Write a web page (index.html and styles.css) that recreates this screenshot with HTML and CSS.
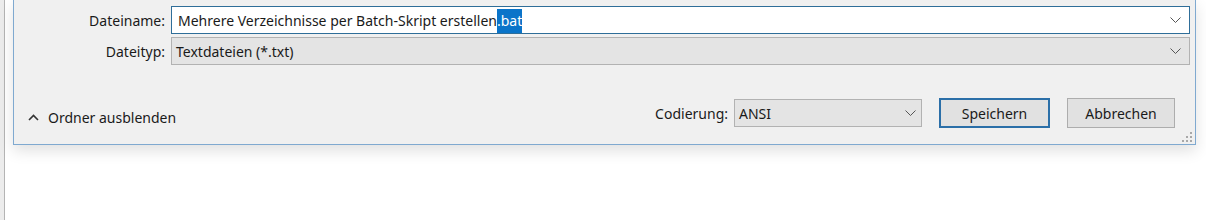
FILE: index.html
```html
<!DOCTYPE html>
<html lang="de">
<head>
<meta charset="utf-8">
<title>Speichern unter</title>
<link rel="stylesheet" href="styles.css">
</head>
<body>
<div class="page">
  <div class="strip"></div>
  <div class="content">
    <div class="dialog">
      <div class="fields">
        <label class="label">Dateiname:</label>
        <div class="input focused">
          <span class="value">Mehrere Verzeichnisse per Batch-Skript erstellen<span class="sel">.bat</span></span>
          <svg class="chev" width="11" height="6" viewBox="0 0 11 6"><path d="M0.5 0.5 L5.5 5.5 L10.5 0.5" fill="none" stroke="#555" stroke-width="1"/></svg>
        </div>
        <label class="label">Dateityp:</label>
        <div class="input combo">
          <span class="value">Textdateien (*.txt)</span>
          <svg class="chev" width="11" height="6" viewBox="0 0 11 6"><path d="M0.5 0.5 L5.5 5.5 L10.5 0.5" fill="none" stroke="#555" stroke-width="1"/></svg>
        </div>
      </div>
      <div class="bottom">
        <div class="toggle">
          <svg class="up" width="11" height="7" viewBox="0 0 11 7"><path d="M1 6 L5.5 1.5 L10 6" fill="none" stroke="#333" stroke-width="1.6"/></svg>
          <span>Ordner ausblenden</span>
        </div>
        <div class="actions">
          <span class="enc-label">Codierung:</span>
          <div class="input combo enc">
            <span class="value">ANSI</span>
            <svg class="chev" width="11" height="6" viewBox="0 0 11 6"><path d="M0.5 0.5 L5.5 5.5 L10.5 0.5" fill="none" stroke="#555" stroke-width="1"/></svg>
          </div>
          <button class="btn default">Speichern</button>
          <button class="btn">Abbrechen</button>
        </div>
      </div>
      <svg class="grip" width="10" height="10" viewBox="0 0 10 10">
        <g fill="#a8a8a8">
          <rect x="8" y="0" width="2" height="2"/>
          <rect x="4" y="4" width="2" height="2"/><rect x="8" y="4" width="2" height="2"/>
          <rect x="0" y="8" width="2" height="2"/><rect x="4" y="8" width="2" height="2"/><rect x="8" y="8" width="2" height="2"/>
        </g>
      </svg>
    </div>
  </div>
</div>
</body>
</html>
```

FILE: styles.css
```css
* { box-sizing: border-box; }
html, body { margin: 0; padding: 0; }
body {
  background: #ffffff;
  font-family: "Noto Sans", "Open Sans", "DejaVu Sans", sans-serif;
  font-size: 14px;
  color: #1a1a1a;
  width: 1206px;
  height: 220px;
  overflow: hidden;
}
.page {
  display: flex;
  height: 220px;
}
.strip {
  width: 5px;
  background: #ececec;
  border-right: 1px solid #b4b4b4;
  flex: none;
}
.content {
  flex: 1;
  padding-left: 8px;
  padding-right: 10px;
}
.dialog {
  position: relative;
  background: #f0f0f0;
  border: 1px solid #7fa9d0;
  border-top: none;
  height: 145px;
  padding: 6px 5px 0 0;
  box-shadow: 0 6px 14px rgba(0, 0, 0, 0.12);
}
.fields {
  display: grid;
  grid-template-columns: 151px 1fr;
  column-gap: 6px;
  row-gap: 3px;
  align-items: center;
}
.label {
  text-align: right;
  white-space: nowrap;
}
.input {
  height: 28px;
  display: flex;
  align-items: center;
  justify-content: space-between;
  padding: 0 8px 0 6px;
  background: #ffffff;
  border: 1px solid #adadad;
}
.input.focused {
  border-color: #2f6e99;
}
.input.combo {
  background: #e4e4e4;
  border-color: #b2b2b2;
  padding-left: 4px;
}
.value { white-space: nowrap; }
.sel {
  background: #0a74c9;
  color: #ffffff;
  padding: 2px 0 3px;
}
.chev { flex: none; }
.bottom {
  display: flex;
  align-items: center;
  justify-content: space-between;
  margin-top: 33px;
  padding-left: 14px;
  padding-right: 15px;
}
.toggle {
  display: flex;
  align-items: center;
  gap: 9px;
  padding-top: 9px;
}
.actions {
  display: flex;
  align-items: center;
}
.enc-label { margin-right: 6px; }
.input.enc {
  width: 188px;
  padding-right: 5px;
}
.btn {
  font: inherit;
  color: #1a1a1a;
  height: 30px;
  width: 108px;
  background: #e1e1e1;
  border: 1px solid #adadad;
  margin-left: 17px;
  padding: 0;
}
.btn.default {
  width: 111px;
  margin-left: 17px;
  border: 2px solid #2b6fa8;
}
.grip {
  position: absolute;
  right: 3px;
  bottom: 2px;
}
```
